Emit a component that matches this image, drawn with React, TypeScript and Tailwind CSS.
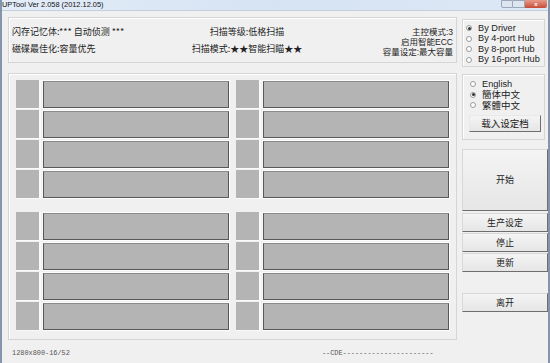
import React from "react";

const cjk = { fontFamily: '"Noto Sans CJK SC", "Noto Sans", sans-serif' };
const arial = { fontFamily: '"Liberation Sans", Arial, "Noto Sans CJK SC", sans-serif' };
const mono = { fontFamily: '"Liberation Mono", "DejaVu Sans Mono", monospace' };

function SlotRow() {
  return (
    <div className="flex h-[30px]">
      <div className="w-[25px] h-[29px] bg-[#b4b4b4] border-r-2 border-r-[#fafafa] border-b border-b-[#fafafa]" />
      <div className="flex-1 ml-[1px] h-[29px] border border-[#fdfdfd] border-l-[#f8f8f8]">
        <div className="h-full border border-[#585858] border-t-[#8a8a8a] bg-[#b4b4b4]" />
      </div>
    </div>
  );
}

function SlotColumn() {
  return (
    <div className="flex flex-col">
      <SlotRow />
      <SlotRow />
      <SlotRow />
      <SlotRow />
    </div>
  );
}

function SlotGroup() {
  return (
    <div className="grid grid-cols-[214px_214px] gap-x-[6px]">
      <SlotColumn />
      <SlotColumn />
    </div>
  );
}

function Radio({ checked, label, size = 9.2 }: { checked?: boolean; label: string; size?: number }) {
  return (
    <div className="flex items-center h-[10.5px]">
      <div className="w-[6px] h-[6px] rounded-full border border-[#9a9a9a] bg-white flex items-center justify-center shrink-0">
        {checked && <div className="w-[3px] h-[3px] rounded-full bg-[#333]" />}
      </div>
      <span className="ml-[6px] leading-none text-[#222]" style={{ fontSize: size }}>
        {label}
      </span>
    </div>
  );
}

function Btn({ label, h, mt = 0 }: { label: string; h: number; mt?: number }) {
  return (
    <div
      className="w-[86px] flex items-center justify-center border border-[#d8d8d8] border-r-[#6e6e6e] border-b-[#6e6e6e] bg-gradient-to-b from-[#f4f4f4] to-[#e6e6e6] text-[9px] text-[#222]"
      style={{ height: h, marginTop: mt, ...cjk }}
    >
      {label}
    </div>
  );
}

export default function App() {
  return (
    <div className="w-[550px] h-[363px] bg-[#f0f0f0] overflow-hidden flex flex-col border-l-2 border-l-[#8494ab] border-r-2 border-r-[#8494ab]">
      {/* title bar */}
      <div className="h-[11px] flex items-center justify-between bg-gradient-to-r from-[#e4edf8] via-[#d6e3f3] to-[#dde8f5] border-b border-[#c4cfdd]">
        <span className="text-[7.4px] leading-none text-[#111]" style={arial}>
          UPTool Ver 2.058 (2012.12.05)
        </span>
        <div className="flex items-start h-full mr-[1px]">
          <div className="w-[12px] h-[8px] border border-[#9aa7b8] bg-[#dce5f0] rounded-bl-[2px]" />
          <div className="w-[12px] h-[8px] border border-l-0 border-[#9aa7b8] bg-[#dce5f0]" />
          <div className="w-[22px] h-[8px] bg-gradient-to-b from-[#e89a8a] to-[#c74a35] rounded-br-[2px] flex items-center justify-center">
            <span className="text-[6px] leading-none text-white font-bold" style={arial}>x</span>
          </div>
        </div>
      </div>

      <div className="flex flex-1">
        {/* left area */}
        <div className="ml-[6px] w-[449px] flex flex-col">
          {/* info panel */}
          <div
            className="mt-[6px] h-[46px] border border-[#d5d5d5] shadow-[inset_1px_1px_0_#ffffff] text-[9px] leading-none text-[#222]"
            style={cjk}
          >
            <div className="flex h-full">
              <div className="w-[176px] pl-[3px] flex flex-col pt-[9px] gap-[7px]">
                <span className="h-[10px] leading-[10px]">闪存记忆体:*** 自动侦测 ***</span>
                <span className="h-[10px] leading-[10px]">磁碟最佳化:容量优先</span>
              </div>
              <div className="w-[124px] flex flex-col items-center pt-[9px] gap-[7px]">
                <span className="h-[10px] leading-[10px]">扫描等级:低格扫描</span>
                <span className="h-[10px] leading-[10px]">扫描模式:★★智能扫瞄★★</span>
              </div>
              <div className="flex-1 flex flex-col items-end pr-[3px] pt-[9px] text-[8.5px]" style={arial}>
                <span className="h-[10px] leading-[10px]">主控模式:3</span>
                <span className="h-[10px] leading-[10px]">启用智能ECC</span>
                <span className="h-[10px] leading-[10px]">容量设定:最大容量</span>
              </div>
            </div>
          </div>

          {/* slots frame */}
          <div className="mt-[10px] h-[267px] border border-[#d5d5d5] shadow-[inset_1px_1px_0_#ffffff] pt-[6px] pl-[7px] flex flex-col gap-[12px]">
            <SlotGroup />
            <SlotGroup />
          </div>

          {/* status */}
          <div className="mt-[10px] flex text-[6.9px] leading-none text-[#555]" style={mono}>
            <span className="ml-[4px]">1280x800-16/52</span>
            <span className="ml-[252px]">--CDE----------------------</span>
          </div>
        </div>

        {/* right column */}
        <div className="ml-[5px] w-[86px] flex flex-col">
          <div className="mt-[8px] w-[83px] h-[48px] border border-[#d5d5d5] shadow-[inset_1px_1px_0_#ffffff] pl-[3px] pt-[3px]" style={arial}>
            <Radio checked label="By Driver" />
            <Radio label="By 4-port Hub" />
            <Radio label="By 8-port Hub" />
            <Radio label="By 16-port Hub" />
          </div>

          <div className="mt-[7px] w-[83px] h-[66px] border border-[#d5d5d5] shadow-[inset_1px_1px_0_#ffffff] pl-[7px] pt-[4px]" style={arial}>
            <Radio label="English" />
            <Radio checked label="簡体中文" size={9.5} />
            <Radio label="繁體中文" size={9.5} />
            <div
              className="mt-[4px] w-[72px] h-[17px] flex items-center justify-center border border-[#e8e8e8] border-r-[#6e6e6e] border-b-[#6e6e6e] bg-gradient-to-b from-[#f4f4f4] to-[#e6e6e6] text-[9.5px] text-[#222] -ml-[1px]"
              style={cjk}
            >
              载入设定档
            </div>
          </div>

          <Btn label="开始" h={62} mt={9} />
          <Btn label="生产设定" h={19} mt={2} />
          <Btn label="停止" h={19} mt={1} />
          <Btn label="更新" h={19} mt={1} />
          <Btn label="离开" h={19} mt={21} />
        </div>
      </div>
    </div>
  );
}
